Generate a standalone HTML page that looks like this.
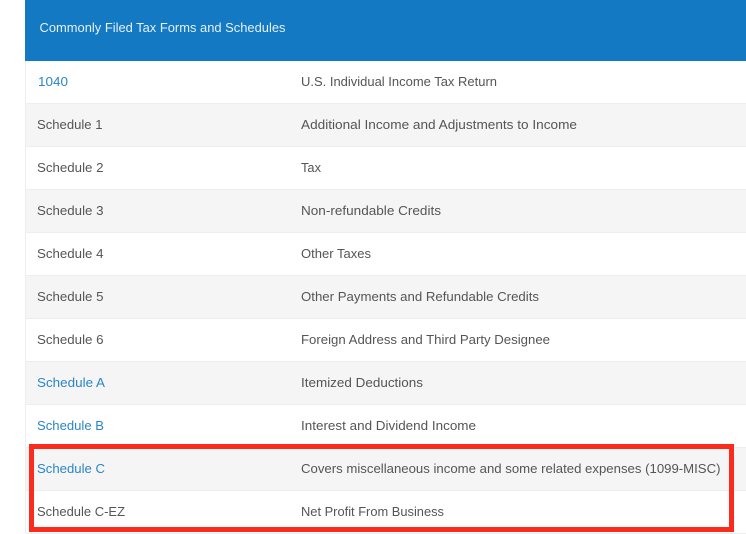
<!DOCTYPE html>
<html lang="en">
<head>
<meta charset="utf-8">
<title>Commonly Filed Tax Forms and Schedules</title>
<style>
html,body{margin:0;padding:0;width:746px;height:534px;overflow:hidden;background:#fff}
svg{display:block}
text{font-family:"Liberation Sans",sans-serif;font-size:13px;fill:#555555}
.l{fill:#2a86c8}
.h{fill:#e6f0f8}
</style>
</head>
<body>
<svg width="746" height="534" viewBox="0 0 746 534" xmlns="http://www.w3.org/2000/svg">
<rect x="25" y="0" width="721" height="534" fill="#fff"/>
<g fill="#f5f5f5">
<rect x="26" y="104" width="720" height="43"/>
<rect x="26" y="190" width="720" height="43"/>
<rect x="26" y="276" width="720" height="43"/>
<rect x="26" y="362" width="720" height="43"/>
<rect x="26" y="448" width="720" height="43"/>
</g>
<g fill="#eeeeee">
<rect x="25" y="103" width="721" height="1"/>
<rect x="25" y="146" width="721" height="1"/>
<rect x="25" y="189" width="721" height="1"/>
<rect x="25" y="232" width="721" height="1"/>
<rect x="25" y="275" width="721" height="1"/>
<rect x="25" y="318" width="721" height="1"/>
<rect x="25" y="361" width="721" height="1"/>
<rect x="25" y="404" width="721" height="1"/>
<rect x="25" y="447" width="721" height="1"/>
<rect x="25" y="490" width="721" height="1"/>
<rect x="25" y="533" width="721" height="1"/>
<rect x="25" y="61" width="1" height="473"/>
</g>
<rect x="25" y="0" width="721" height="61" fill="#1379c2"/>
<text class="h" x="39.5" y="32" textLength="246" lengthAdjust="spacingAndGlyphs">Commonly Filed Tax Forms and Schedules</text>

<text class="l" x="38" y="86" textLength="30" lengthAdjust="spacingAndGlyphs">1040</text>
<text x="301" y="86" textLength="196" lengthAdjust="spacingAndGlyphs">U.S. Individual Income Tax Return</text>

<text x="37" y="129" textLength="65.5" lengthAdjust="spacingAndGlyphs">Schedule 1</text>
<text x="301" y="129" textLength="276" lengthAdjust="spacingAndGlyphs">Additional Income and Adjustments to Income</text>

<text x="37" y="172" textLength="66.5" lengthAdjust="spacingAndGlyphs">Schedule 2</text>
<text x="301" y="172" textLength="20" lengthAdjust="spacingAndGlyphs">Tax</text>

<text x="37" y="215" textLength="66.5" lengthAdjust="spacingAndGlyphs">Schedule 3</text>
<text x="301" y="215" textLength="140" lengthAdjust="spacingAndGlyphs">Non-refundable Credits</text>

<text x="37" y="258" textLength="66.5" lengthAdjust="spacingAndGlyphs">Schedule 4</text>
<text x="301" y="258" textLength="70" lengthAdjust="spacingAndGlyphs">Other Taxes</text>

<text x="37" y="301" textLength="66.5" lengthAdjust="spacingAndGlyphs">Schedule 5</text>
<text x="301" y="301" textLength="238" lengthAdjust="spacingAndGlyphs">Other Payments and Refundable Credits</text>

<text x="37" y="344" textLength="66.5" lengthAdjust="spacingAndGlyphs">Schedule 6</text>
<text x="301" y="344" textLength="249" lengthAdjust="spacingAndGlyphs">Foreign Address and Third Party Designee</text>

<text class="l" x="37" y="387" textLength="68" lengthAdjust="spacingAndGlyphs">Schedule A</text>
<text x="301" y="387" textLength="122" lengthAdjust="spacingAndGlyphs">Itemized Deductions</text>

<text class="l" x="37" y="430" textLength="67" lengthAdjust="spacingAndGlyphs">Schedule B</text>
<text x="301" y="430" textLength="175" lengthAdjust="spacingAndGlyphs">Interest and Dividend Income</text>

<text class="l" x="37" y="473" textLength="68" lengthAdjust="spacingAndGlyphs">Schedule C</text>
<text x="301" y="473" textLength="419.5" lengthAdjust="spacingAndGlyphs">Covers miscellaneous income and some related expenses (1099-MISC)</text>

<text x="37" y="516" textLength="88" lengthAdjust="spacingAndGlyphs">Schedule C-EZ</text>
<text x="301" y="516" textLength="143" lengthAdjust="spacingAndGlyphs">Net Profit From Business</text>

<rect x="31.5" y="446.5" width="700" height="83" fill="none" stroke="#fb2b1e" stroke-width="5"/>
</svg>
</body>
</html>
